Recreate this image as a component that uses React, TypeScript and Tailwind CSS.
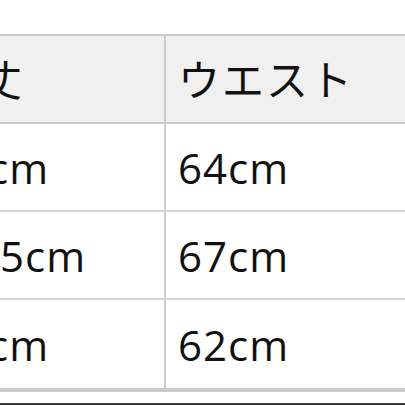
const rows = [
  { length: "88cm", waist: "64cm" },
  { length: "90.5cm", waist: "67cm" },
  { length: "87cm", waist: "62cm" },
];

const font = { fontFamily: '"Open Sans", "Noto Sans CJK JP", sans-serif' };

export default function App() {
  return (
    <div className="w-[405px] h-[405px] bg-white overflow-hidden flex flex-col" style={font}>
      <div className="mt-[34px] ml-[-76px] w-[560px] border-t-2 border-b-4 border-[#cbcbcb] text-[#111]">
        <div className="flex h-[88px] bg-[#f0f0f0] border-b-2 border-[#cbcbcb] text-[42px] tracking-[2px]">
          <div className="w-[242px] border-r-2 border-[#cbcbcb] pl-[12px] flex items-center">着丈</div>
          <div className="flex-1 pl-[12px] flex items-center">ウエスト</div>
        </div>
        {rows.map((row, i) => (
          <div
            key={row.waist}
            className={`flex h-[88px] text-[42px] tracking-[1px] ${i < rows.length - 1 ? "border-b-2 border-[#d4d4d4]" : ""}`}
          >
            <div className="w-[242px] border-r-2 border-[#cbcbcb] pl-[14px] flex items-center">{row.length}</div>
            <div className="flex-1 pl-[12px] flex items-center">{row.waist}</div>
          </div>
        ))}
      </div>
      <div className="mt-auto h-[2px] bg-[#3a3a3a]" />
    </div>
  );
}
